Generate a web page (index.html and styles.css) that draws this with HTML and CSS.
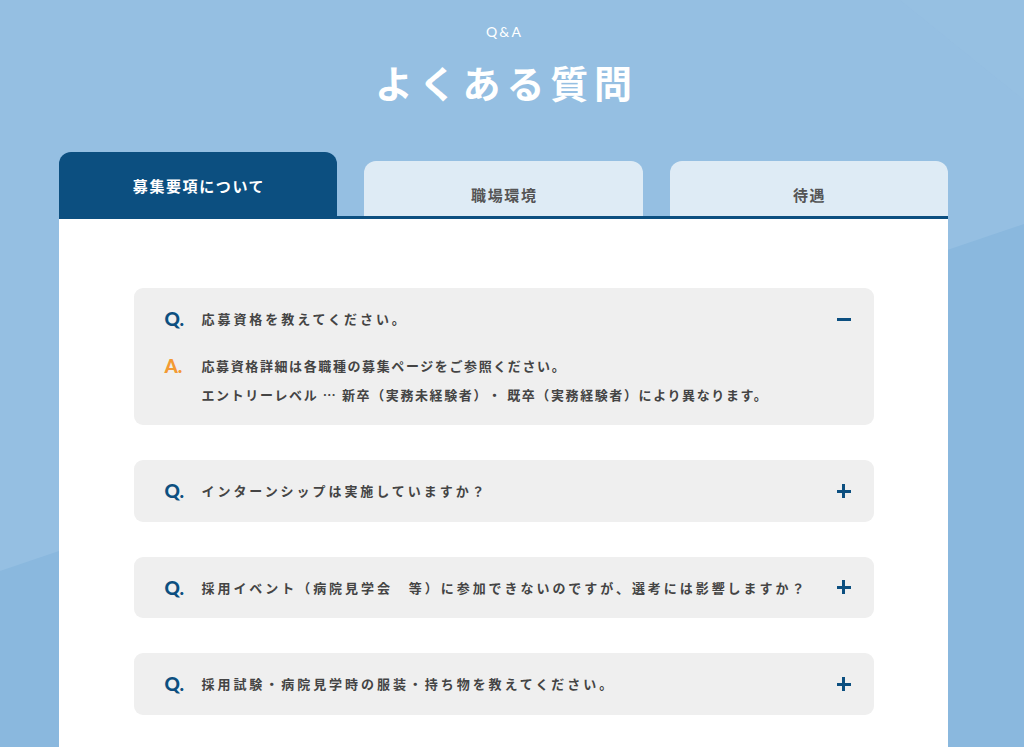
FILE: index.html
```html
<!DOCTYPE html>
<html lang="ja">
<head>
<meta charset="utf-8">
<title>よくある質問</title>
<link rel="stylesheet" href="styles.css">
</head>
<body>
<svg class="bg-deco" width="1024" height="747" viewBox="0 0 1024 747" aria-hidden="true">
  <polygon points="0,0 1024,0 1024,224 0,571" fill="#95bfe2"/>
  <polygon points="800,0 1024,0 1024,100 900,0" fill="#9cc4e5" opacity="0.25"/>
</svg>
<div class="page">
  <header class="head">
    <p class="head-en">Q&amp;A</p>
    <h1 class="head-title">よくある質問</h1>
  </header>
  <div class="tabs">
    <div class="tab tab-active">募集要項について</div>
    <div class="tab">職場環境</div>
    <div class="tab">待遇</div>
  </div>
  <main class="panel">
    <div class="faq faq-open">
      <div class="faq-q">
        <span class="mark mark-q">Q.</span>
        <span class="q-text">応募資格を教えてください。</span>
        <span class="toggle"><span class="bar-h"></span></span>
      </div>
      <div class="faq-a">
        <span class="mark mark-a">A.</span>
        <div class="a-text">
          <p>応募資格詳細は各職種の募集ページをご参照ください。</p>
          <p>エントリーレベル … 新卒（実務未経験者）・ 既卒（実務経験者）により異なります。</p>
        </div>
      </div>
    </div>
    <div class="faq">
      <div class="faq-q">
        <span class="mark mark-q">Q.</span>
        <span class="q-text">インターンシップは実施していますか？</span>
        <span class="toggle"><span class="bar-h"></span><span class="bar-v"></span></span>
      </div>
    </div>
    <div class="faq">
      <div class="faq-q">
        <span class="mark mark-q">Q.</span>
        <span class="q-text">採用イベント（病院見学会　等）に参加できないのですが、選考には影響しますか？</span>
        <span class="toggle"><span class="bar-h"></span><span class="bar-v"></span></span>
      </div>
    </div>
    <div class="faq">
      <div class="faq-q">
        <span class="mark mark-q">Q.</span>
        <span class="q-text">採用試験・病院見学時の服装・持ち物を教えてください。</span>
        <span class="toggle"><span class="bar-h"></span><span class="bar-v"></span></span>
      </div>
    </div>
  </main>
</div>
</body>
</html>
```

FILE: styles.css
```css
* { box-sizing: border-box; }
html, body { margin: 0; padding: 0; }
body {
  background: #8ab8de;
  font-family: "Noto Sans CJK JP", "Noto Sans", sans-serif;
  height: 747px;
  overflow: hidden;
  position: relative;
  text-spacing-trim: space-all;
}
.bg-deco {
  position: absolute;
  left: 0;
  top: 0;
  z-index: 0;
}
.page {
  position: relative;
  z-index: 1;
  width: 1007px;
}
.head {
  padding-top: 22px;
  text-align: center;
  color: #fff;
}
.head-en {
  margin: 0;
  font-family: "Lato", "Noto Sans", sans-serif;
  font-size: 14px;
  line-height: 20px;
  letter-spacing: 2px;
  padding-left: 2px;
}
.head-title {
  margin: 15px 0 0;
  font-size: 38px;
  line-height: 50px;
  font-weight: 700;
  letter-spacing: 5.8px;
  padding-left: 5.8px;
}
.tabs {
  width: 889px;
  margin: 45px auto 0;
  display: flex;
  gap: 27px;
  align-items: flex-end;
}
.tab {
  flex: 1;
  height: 55px;
  padding-top: 24px;
  padding-left: 1.6px;
  line-height: 20px;
  text-align: center;
  font-size: 15px;
  font-weight: 700;
  letter-spacing: 1.6px;
  color: #555;
  background: #deebf5;
  border-radius: 12px 12px 0 0;
}
.tab-active {
  height: 64px;
  background: #0c4f80;
  color: #fff;
}
.panel {
  width: 889px;
  margin: 0 auto;
  background: #fff;
  border-top: 3px solid #0c4f80;
  padding: 69px 0 40px;
  display: flex;
  flex-direction: column;
  gap: 35px;
  min-height: 600px;
}
.faq {
  width: 740px;
  margin: 0 auto;
  background: #efefef;
  border-radius: 9px;
}
.faq-q {
  display: flex;
  align-items: center;
  padding: 20px 23px 20.5px 31px;
  line-height: 21px;
}
.faq-open .faq-q { padding-bottom: 20px; }
.mark {
  width: 37px;
  flex: none;
  font-family: "Lato", "Open Sans", sans-serif;
  font-weight: 900;
  font-size: 19px;
}
.mark-q { color: #0c4f80; }
.mark-a { color: #f39a33; }
.q-text {
  flex: 1;
  font-size: 13px;
  font-weight: 700;
  letter-spacing: 2.95px;
  color: #444;
}
.toggle {
  position: relative;
  width: 14px;
  height: 14px;
  flex: none;
}
.bar-h, .bar-v {
  position: absolute;
  background: #0c4f80;
}
.bar-h { left: 0; top: 6px; width: 14px; height: 3px; }
.bar-v { left: 5.5px; top: 0; width: 3px; height: 14px; }
.faq-a {
  display: flex;
  align-items: flex-start;
  padding: 1.5px 23px 16.5px 31px;
  line-height: 29px;
}
.faq-a .mark { line-height: 29px; }
.a-text {
  font-size: 13px;
  font-weight: 700;
  letter-spacing: 1.6px;
  color: #444;
}
.a-text p { margin: 0; }
```
